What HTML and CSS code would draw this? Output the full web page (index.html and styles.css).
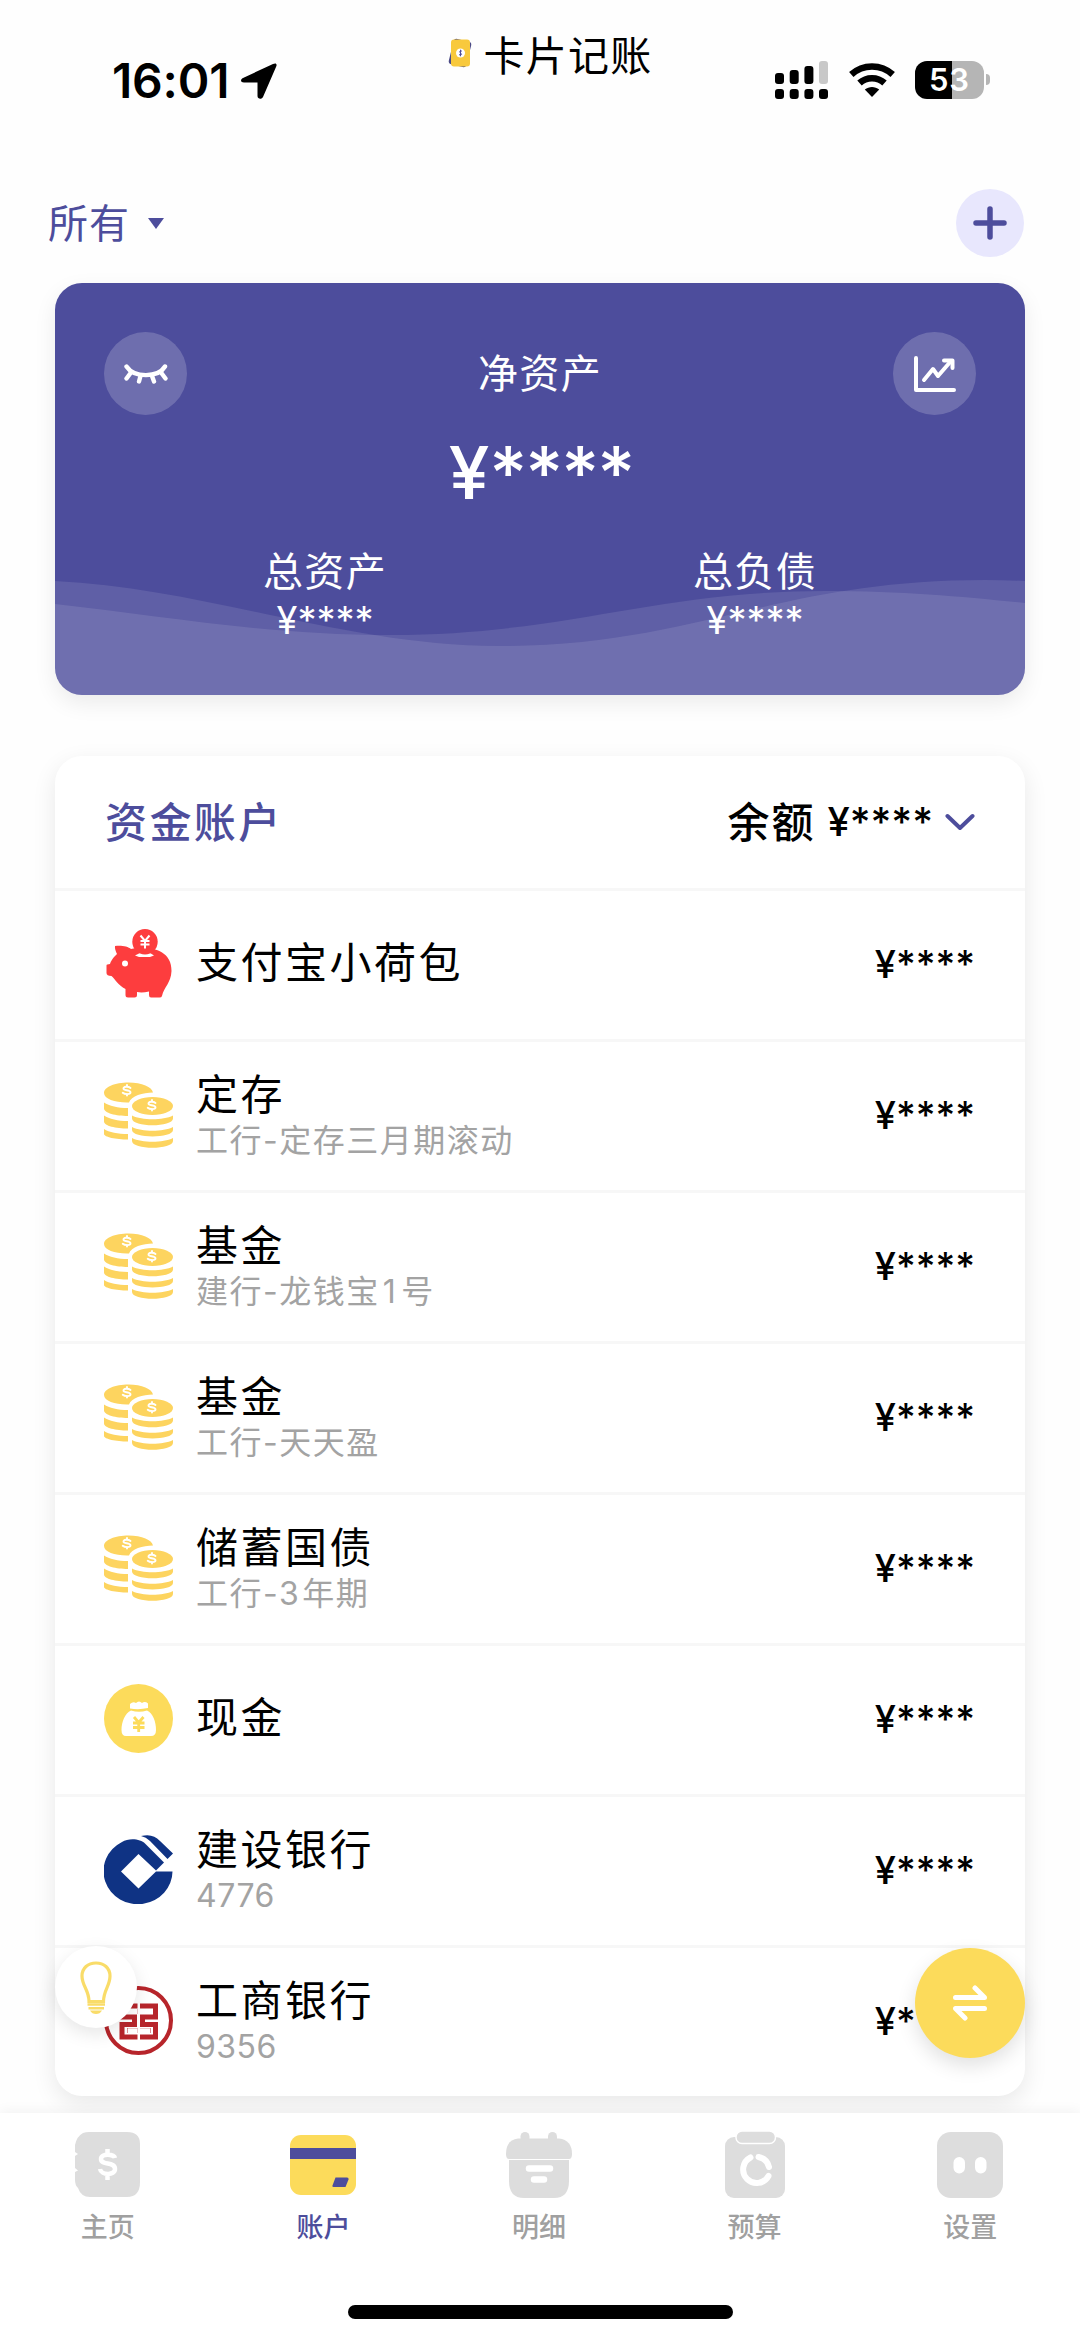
FILE: index.html
```html
<!DOCTYPE html>
<html lang="zh-CN">
<head>
<meta charset="utf-8">
<title>卡片记账</title>
<link rel="stylesheet" href="styles.css">
</head>
<body>
<svg class="defs" width="0" height="0" aria-hidden="true">
  <symbol id="coins" viewBox="0 0 69 69">
    <g fill="#fdd45f">
      <path d="M0 13C0 7 11 2.500 24.500 2.500S48 7 49 12.500C39 12.500 27 16 25 22.500C12 23 0 19 0 13Z"/>
      <path d="M0 22.500C5 26 14 28 24 28V36C12 36 0 33 0 28.500Z"/>
      <path d="M0 35.500C5 39 14 41 24 41V48.500C12 48.500 0 46 0 41.500Z"/>
      <path d="M0 49C5 52.500 14 54 24 54V59.500C12 59.500 0 57 0 54Z"/>
      <ellipse cx="48.500" cy="26" rx="20.500" ry="9"/>
      <path d="M28 35.500C38 40.500 59 40.500 69 35.500V38.500C69 47.500 28 47.500 28 38.500Z"/>
      <path d="M28 47C38 52 59 52 69 47V50C69 58.500 28 58.500 28 50Z"/>
      <path d="M28 58C38 63 59 63 69 58V61C69 70 28 70 28 61Z"/>
    </g>
    <g fill="none" stroke="#fff" stroke-width="1.900" stroke-linecap="round">
      <path d="M26.500 8C24 6 19.500 6.500 19.500 8.700C19.500 11 26.500 9.500 26.500 12.500C26.500 14.500 21 14.700 18.700 12.800M23 5V6.500M23 14V15.500"/>
      <path d="M51.500 23C49 21 44.500 21.500 44.500 23.700C44.500 26 51.500 24.500 51.500 27.500C51.500 29.500 46 29.700 43.700 27.800M48 20V21.500M48 29V30.500"/>
    </g>
  </symbol>
</svg>
<div class="phone">
  <header class="status">
    <div class="status-time">16:01
      <svg width="36" height="36" viewBox="0 0 36 36"><path d="M2 15L32 1C35-.5 36.500 1 35 4L22 34C20.500 37 16.500 36 16.500 33V19.500H3C-.5 19.500-1 16.500 2 15Z"/></svg>
    </div>
    <div class="app-name">
      <svg width="27" height="30" viewBox="0 0 27 30">
        <rect x="4" y="2" width="18" height="26" rx="3" fill="#4c4b86" transform="rotate(14 13 15)"/>
        <rect x="4" y="1.500" width="19" height="27" rx="3" fill="#f8c93d"/>
        <circle cx="13.500" cy="15" r="4.500" fill="#fff"/>
        <path d="M15 13.300C13 12 11.700 14 13.500 15S15 17.300 12 16.700M13.500 11.700V18.300" fill="none" stroke="#4d4d9c" stroke-width="1"/>
      </svg>
      <span>卡片记账</span>
    </div>
    <div class="status-icons">
      <svg width="54" height="38" viewBox="0 0 54 38">
        <rect x="0" y="12" width="9" height="11" rx="3"/><rect x="14.700" y="9" width="9" height="14" rx="3"/><rect x="29.400" y="5" width="9" height="18" rx="3"/><rect x="44" y="0" width="9" height="23" rx="3" fill="#c8c8c8"/>
        <rect x="0" y="28" width="9" height="10" rx="3"/><rect x="14.700" y="28" width="9" height="10" rx="3"/><rect x="29.400" y="28" width="9" height="10" rx="3"/><rect x="44" y="28" width="9" height="10" rx="3"/>
      </svg>
      <svg class="wifi" width="46" height="35" viewBox="0 0 46 35">
        <g fill="none" stroke="#000" stroke-width="6.500"><path d="M2.300 11.500C14 .8 32 .8 43.700 11.500"/><path d="M10.500 20C17.500 13.500 28.500 13.500 35.500 20"/></g>
        <path d="M15.800 26.500C20 23 26 23 30.200 26.500L23 34Z"/>
      </svg>
      <div class="battery"><span>53</span></div>
    </div>
  </header>

  <div class="toolbar">
    <div class="filter"><span>所有</span><i class="caret"></i></div>
    <button class="add" aria-label="添加"><svg width="34" height="34" viewBox="0 0 34 34"><path d="M17 3V31M3 17H31" stroke="#4d4d9c" stroke-width="5.500" stroke-linecap="round"/></svg></button>
  </div>

  <section class="summary">
    <svg class="waves" viewBox="0 0 970 115" preserveAspectRatio="none">
      <g fill="#fff" fill-opacity=".1">
        <path d="M0 1C150 8 290 66 444 66C640 66 720 0 930 0Q950 0 970 1V115H0Z"/>
        <path d="M0 24C110 36 210 55 335 55C510 55 600 11 770 11C850 11 910 17 970 23V115H0Z"/>
      </g>
    </svg>
    <div class="summary-top">
      <div class="round"><svg width="44" height="20" viewBox="0 0 44 20"><g fill="none" stroke="#fff" stroke-width="4.400" stroke-linecap="round"><path d="M2.500 2.500C10 14 34 14 41 2.500"/><path d="M7 8.500L2.500 14.500M16.500 12L15 17.500M28 12L30 17.500M37 8.500L41.500 14.500"/></g></svg></div>
      <div class="label">净资产</div>
      <div class="round"><svg width="42" height="38" viewBox="0 0 42 38"><g fill="none" stroke="#fff" stroke-width="4" stroke-linecap="round" stroke-linejoin="round"><path d="M2 3V35H40"/><path d="M10 25L19 14L24 21L37 6"/><path d="M30 5.500H38.500V13"/></g></svg></div>
    </div>
    <div class="net">¥<span>****</span></div>
    <div class="totals">
      <div><div class="label">总资产</div><div class="money">¥<span>****</span></div></div>
      <div><div class="label">总负债</div><div class="money">¥<span>****</span></div></div>
    </div>
  </section>

  <section class="accounts">
    <div class="accounts-head">
      <h2>资金账户</h2>
      <div class="balance"><b>余额</b><div class="money">¥<span>****</span></div>
        <svg width="30" height="18" viewBox="0 0 30 18"><path d="M2.500 3L15 15L27.500 3" fill="none" stroke="#4d4d9c" stroke-width="4" stroke-linecap="round" stroke-linejoin="round"/></svg></div>
    </div>
    <div class="row">
      <svg class="icon" viewBox="0 0 69 69">
        <path d="M11 17C16 16 24 17 27 20C40 17 68 18 67.500 42C67 54 60 58 58 67Q57.500 68.500 55.500 68.500H47Q45 68.500 45 66V62.500Q38 64 33 63V66Q33 68.500 30.500 68.500H24Q21.500 68.500 21.500 66V60C14 56 11 50 7.500 47Q2.500 47 2.500 44V36.500Q2.500 35 6 35Q7.500 30 13 25Q10.500 20 11 17Z" fill="#fd3d3e"/>
        <circle cx="21" cy="34.500" r="3" fill="#fff"/><path d="M31 26.500L36 24H46L50 26.500L46 28H35Z" fill="#fff"/>
        <circle cx="41" cy="12.700" r="12.700" fill="#fd3d3e"/><path d="M36.500 6.500L41 12L45.500 6.500M41 12V19.500M36.500 12H45.500M36.500 15.500H45.500" fill="none" stroke="#fff" stroke-width="2"/>
      </svg>
      <div class="name"><div>支付宝小荷包</div></div><div class="money">¥<span>****</span></div>
    </div>
    <div class="row"><svg class="icon"><use href="#coins"/></svg><div class="name"><div>定存</div><small>工行-定存三月期滚动</small></div><div class="money">¥<span>****</span></div></div>
    <div class="row"><svg class="icon"><use href="#coins"/></svg><div class="name"><div>基金</div><small>建行-龙钱宝<em class="one">1</em>号</small></div><div class="money">¥<span>****</span></div></div>
    <div class="row"><svg class="icon"><use href="#coins"/></svg><div class="name"><div>基金</div><small>工行-天天盈</small></div><div class="money">¥<span>****</span></div></div>
    <div class="row"><svg class="icon"><use href="#coins"/></svg><div class="name"><div>储蓄国债</div><small>工行-<em>3</em>年期</small></div><div class="money">¥<span>****</span></div></div>
    <div class="row">
      <svg class="icon" viewBox="0 0 69 69"><circle cx="34.500" cy="34.500" r="34.500" fill="#fcdb5b"/><path d="M26 20Q29 17 32 19Q35 16 38 19Q41 17 44 19.500V24Q35 26 26 24.500ZM27 26.500Q35 29 43 26.500C49 29 52 38 52 46Q52 52 47 52H22Q17.500 52 17.500 46C17.500 38 21 29 27 26.500Z" fill="#fff"/><path d="M30 33L34.700 38.500L39.500 33M34.700 38.500V48M29 39H40.500M29 43.500H40.500" fill="none" stroke="#fcdb5b" stroke-width="2.800"/></svg>
      <div class="name"><div>现金</div></div><div class="money">¥<span>****</span></div>
    </div>
    <div class="row">
      <svg class="icon" viewBox="0 0 69 69"><g fill="#0f3384"><path d="M60 27.500L41 8.500C37 4 25 2.500 18 7A34.500 33 0 1 0 68.500 36.500H52L34.500 53.500L17 36.500L34.500 19L52 35.500Z"/><path d="M37 1C46-1 51 1 56 6L69 18.500L63.500 24L46 6Q42 2 37 1Z"/></g></svg>
      <div class="name"><div>建设银行</div><small class="digits">4776</small></div><div class="money">¥<span>****</span></div>
    </div>
    <div class="row">
      <svg class="icon" viewBox="0 0 69 69"><circle cx="34.500" cy="34.500" r="32.500" fill="none" stroke="#b7252b" stroke-width="4"/><path d="M33.500 20H18V31H30.500V38.500H18V51H33.500M23 44.500H33.500M36 20H51.500V31H38.500V38.500H51.500V51H36M36 44.500H46.500M24 25.500H33.500M36 25.500H46" fill="none" stroke="#b7252b" stroke-width="5"/><path d="M23.500 25.500H33.500M36 25.500H46M23.500 44.800H33.500M36 44.800H46" fill="none" stroke="#fff" stroke-width="5"/></svg>
      <div class="name"><div>工商银行</div><small class="digits">9356</small></div><div class="money">¥<span>****</span></div>
    </div>
  </section>

  <button class="tip" aria-label="提示"><svg width="32" height="53" viewBox="0 0 32 53"><path d="M9 40.500C9 29 2 25 2 15C2 7 8 2 16 2S30 7 30 15C30 25 23.500 29 23.500 40.500Z" fill="none" stroke="#f9dc69" stroke-width="3.200"/><path d="M7.500 43.500H25M8.500 47.300H24" stroke="#f9dc69" stroke-width="2.600"/><path d="M10 49.500H22Q20 53 16 53T10 49.500Z" fill="#f9dc69"/></svg></button>
  <button class="transfer" aria-label="转账"><svg width="36" height="36" viewBox="0 0 36 36"><g fill="none" stroke="#fff" stroke-width="5" stroke-linecap="round" stroke-linejoin="round"><path d="M3.500 12.500H32.500L23 3"/><path d="M32.500 23.500H3.500L13 33"/></g></svg></button>

  <nav class="tabs">
    <div class="tab"><svg width="68" height="68" viewBox="0 0 68 68"><path d="M15 1H53Q66 1 66 13V51Q66 66 53 66H16Q7 66 4 57Q1 54 1 49V41L4 39.500L1 37V25L4 23L1 21V14Q3 5 9 2Q12 1 15 1Z" fill="#ddd"/><path d="M41 27C40 23 27 22 27 28C27 35 41 30 41 38C41 45 27 44 26 38M33.500 18V24M33.500 43V49" fill="none" stroke="#fff" stroke-width="4.500"/></svg><span>主页</span></div>
    <div class="tab active"><svg width="68" height="68" viewBox="0 0 68 68"><rect x="1" y="4" width="66" height="60" rx="11" fill="#fcdb5b"/><path d="M1 17H67V28H1Z" fill="#4d4d9c"/><path d="M46.500 46.500H58Q60 46.500 59.500 48.500L56.500 56H44.500Q43 56 43.500 54.500Z" fill="#4d4d9c"/></svg><span>账户</span></div>
    <div class="tab"><svg width="68" height="68" viewBox="0 0 68 68"><g fill="#ddd"><rect x="15.500" y="1" width="9" height="14" rx="4.500"/><rect x="43" y="1" width="9" height="14" rx="4.500"/><path d="M13 7.500H54Q67 9 67 23Q67 28 64 28H4Q1 28 1 23Q1 9 13 7.500Z"/><path d="M4 29H64V50Q64 67 49 67H19Q4 67 4 50Z"/></g><path d="M24 37.500H45M29 48.500H39" stroke="#fff" stroke-width="6.500" stroke-linecap="round"/></svg><span>明细</span></div>
    <div class="tab"><svg width="68" height="68" viewBox="0 0 68 68"><rect x="4" y="6" width="60" height="61" rx="9" fill="#ddd"/><rect x="15" y="0" width="39.500" height="12.500" rx="6" fill="#ddd" stroke="#fff" stroke-width="1.500"/><g fill="none" stroke="#fff" stroke-width="6" stroke-linecap="round"><path d="M29.500 26.500A13.500 13.500 0 1 0 47.500 45"/><path d="M37.500 26A13.500 13.500 0 0 1 48 36"/></g></svg><span>预算</span></div>
    <div class="tab"><svg width="68" height="68" viewBox="0 0 68 68"><rect x="1" y="1" width="66" height="66" rx="14" fill="#ddd"/><rect x="17.500" y="26" width="11.500" height="16.500" rx="5.700" fill="#fff"/><rect x="39" y="26" width="11.500" height="16.500" rx="5.700" fill="#fff"/></svg><span>设置</span></div>
    <div class="home-bar"></div>
  </nav>
</div>
</body>
</html>
```
FILE: styles.css
```css
* { box-sizing: border-box; }
body { margin: 0; background: #fefefe; color: #000; font-family: Inter, "Noto Sans CJK SC", sans-serif; }
button { border: 0; padding: 0; display: flex; align-items: center; justify-content: center; border-radius: 50%; }
svg { display: block; flex: none; }
.defs { position: absolute; }
.phone { position: relative; width: 1080px; height: 2341px; overflow: hidden; display: flex; flex-direction: column; }

.status { height: 189px; display: grid; grid-template-columns: 1fr auto 1fr; align-items: start; }
.status-time { display: flex; align-items: center; gap: 12px; padding: 55px 0 0 112px; height: 106px; font-size: 48px; font-weight: 600; letter-spacing: -.2px; }
.app-name { display: flex; align-items: center; gap: 10px; height: 60px; margin-top: 23px; font-size: 41px; letter-spacing: 1.200px; white-space: nowrap; padding-left: 19px; }
.status-icons { display: flex; justify-content: flex-end; align-items: center; padding: 61px 96px 0 0; }
.wifi { margin: 0 20px; }
.battery { position: relative; width: 69px; height: 38px; border-radius: 12px; background: linear-gradient(90deg, #000 37px, #b5b5b5 37px); color: #fff; font-size: 31px; line-height: 38px; font-weight: 600; text-align: center; letter-spacing: 1px; }
.battery::after { content: ""; position: absolute; left: 71px; top: 13px; width: 4px; height: 11px; border-radius: 0 5px 5px 0; background: #b5b5b5; }

.toolbar { height: 94px; padding: 0 56px 0 48px; display: flex; justify-content: space-between; align-items: flex-start; }
.filter { height: 68px; display: flex; align-items: center; gap: 18px; font-size: 40px; letter-spacing: 1px; color: #4d4d9c; }
.filter span { padding-bottom: 5px; }
.caret { border: 8.500px solid transparent; border-top: 11px solid #4d4d9c; border-bottom: 0; }
.add { width: 68px; height: 68px; background: #e8e7fd; }

.summary { position: relative; width: 970px; height: 412px; margin: 0 auto 61px; border-radius: 27px; overflow: hidden; background: #4d4d9c; color: #fff; box-shadow: 0 8px 22px rgba(0,0,0,.08); }
.waves { position: absolute; left: 0; bottom: 0; width: 970px; height: 115px; }
.summary-top { display: flex; justify-content: space-between; align-items: center; padding: 49px 49px 0; }
.round { width: 83px; height: 83px; border-radius: 50%; background: rgba(255,255,255,.19); display: flex; align-items: center; justify-content: center; }
.label { position: relative; font-size: 40px; line-height: 56px; letter-spacing: 1.300px; text-align: center; }
.net { display: flex; justify-content: center; height: 90px; margin-top: 13px; font-size: 73px; line-height: 90px; font-weight: 500; }
.net span { letter-spacing: -2px; margin-right: -2px; }
.totals { position: relative; display: flex; padding: 26px 55px 0; }
.totals > div { flex: 1; }
.money { display: flex; align-items: center; font-size: 38px; line-height: 44px; font-weight: 500; }
.totals .money { justify-content: center; font-weight: 400; margin-top: -2px; }

.accounts { width: 970px; height: 1340px; margin: 0 auto; border-radius: 27px; background: #fff; box-shadow: 0 8px 24px rgba(0,0,0,.09); }
.accounts-head { height: 132px; padding: 0 50px; display: flex; align-items: center; justify-content: space-between; }
.accounts-head h2 { margin: 0; padding-bottom: 6px; font-size: 42px; font-weight: 500; letter-spacing: 2.400px; color: #4d4d9c; }
.balance { display: flex; align-items: center; font-size: 42px; gap: 12px; }
.balance b { font-weight: 500; letter-spacing: 2px; padding-bottom: 6px; }
.balance .money { font-size: 40px; }
.row { height: 151px; border-top: 3px solid #f7f7f7; padding: 0 50px 3px 49px; display: flex; align-items: center; }
.icon { width: 69px; height: 69px; }
.name { flex: 1; margin: 4px 0 0 23px; font-size: 42px; line-height: 48px; letter-spacing: 2.500px; }
.name > div:only-child { margin-top: -5px; }
.name small { display: block; font-size: 32px; line-height: 44px; letter-spacing: 1.500px; color: #a3a3a3; }
.name .digits { letter-spacing: .5px; }
.name em { font-style: normal; margin-right: 2px; }
.name .one { margin: 0 4px 0 3px; }

.tip { position: absolute; left: 55px; top: 1946px; width: 82px; height: 82px; background: #fff; box-shadow: 0 6px 18px rgba(0,0,0,.1); }
.transfer { position: absolute; left: 915px; top: 1948px; width: 110px; height: 110px; background: #fcdb5b; box-shadow: 0 8px 20px rgba(0,0,0,.12); }

.tabs { position: absolute; left: 0; bottom: 0; width: 1080px; height: 228px; background: #fff; box-shadow: 0 -2px 12px rgba(0,0,0,.05); display: flex; padding: 18px 2px 0 0; }
.tab { flex: 1; display: flex; flex-direction: column; align-items: center; gap: 9px; font-size: 27px; line-height: 40px; font-weight: 500; color: #a0a0a0; }
.tab.active { color: #4d4d9c; }
.home-bar { position: absolute; left: 348px; top: 192px; width: 385px; height: 14px; border-radius: 7px; background: #000; }
```
